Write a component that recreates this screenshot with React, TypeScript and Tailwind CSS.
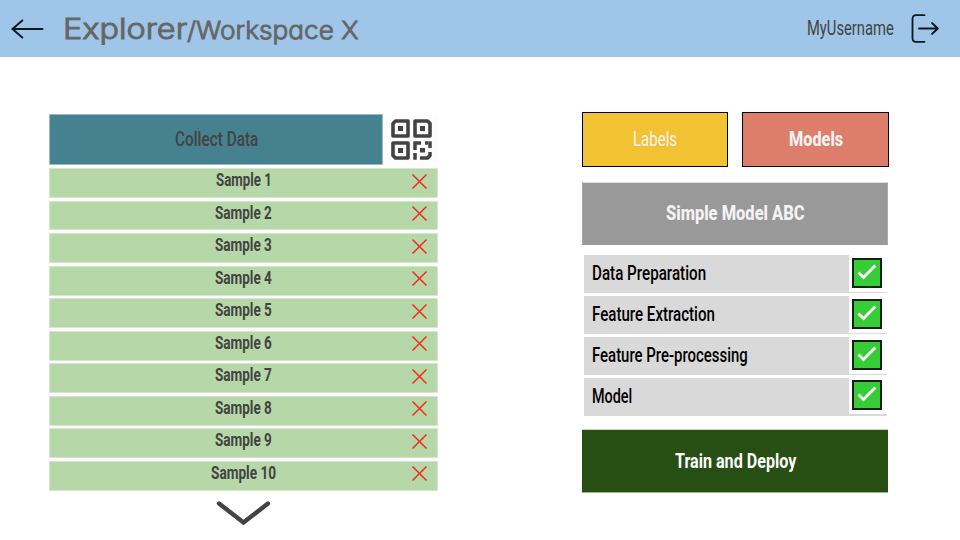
import React, { useLayoutEffect, useRef, useState } from "react";

// Sets a line of text to an exact width by condensing or widening its glyphs.
function Fit({ width, className = "", children }: { width: number; className?: string; children: string }) {
  const ref = useRef<HTMLSpanElement>(null);
  const [scale, setScale] = useState(1);
  useLayoutEffect(() => {
    if (ref.current) setScale(width / ref.current.offsetWidth);
  }, [width, children]);
  return (
    <span className="flex shrink-0" style={{ width }}>
      <span
        ref={ref}
        className={`inline-block shrink-0 origin-left whitespace-nowrap font-[Roboto,sans-serif] ${className}`}
        style={{ transform: `scaleX(${scale})` }}
      >
        {children}
      </span>
    </span>
  );
}

const samples = [56, 57, 57, 57, 57, 57, 57, 57, 57, 65];

const steps = [
  { name: "Data Preparation", width: 114 },
  { name: "Feature Extraction", width: 123 },
  { name: "Feature Pre-processing", width: 156 },
  { name: "Model", width: 40 },
];

function QrIcon() {
  return (
    <svg className="h-[41px] w-[41px]" viewBox="0 0 41 41" fill="none" stroke="#434343" strokeWidth="3.6">
      <path d="M4.500 2H17V17H2V4.500Z M24 2H36.500L39 4.500V17H24Z M2 24H17V39H4.500L2 36.500Z" strokeLinejoin="round" />
      <path d="M7 7h5v5h-5z M29 7h5v5h-5z M7 29h5v5h-5z" fill="#434343" stroke="none" />
      <path d="M24 31V24H30 M34 24H37 M39 22.300V29 M24 34V40.700 M29 39H36.500L39 36.500V33" strokeWidth="3.5" />
      <path d="M29 29h5v4.500h-5z" fill="#434343" stroke="none" />
    </svg>
  );
}

export default function App() {
  return (
    <div className="flex h-[540px] w-[960px] flex-col overflow-hidden bg-white">
      <header className="flex h-[57px] shrink-0 items-center bg-[#9fc5e8] pl-[11px] pr-[20px]">
        <svg className="mt-[1px] h-[20px] w-[33px] shrink-0" viewBox="0 0 33 20" fill="none" stroke="#111a20" strokeWidth="2" strokeLinecap="round">
          <path d="M2 10H31.500 M11.300 1.500L1.500 10L11.300 18.500" />
        </svg>
        <h1 className="ml-[19px] mt-[1px] flex items-baseline text-[#666666]">
          <Fit width={124} className="font-[Inter,sans-serif]! text-[29px] leading-[40px] font-light [-webkit-text-stroke:1px_#666666] [font-feature-settings:'cv11','ss03']">Explorer</Fit>
          <Fit width={172} className="font-[Inter,sans-serif]! text-[24.5px] leading-[40px] font-light [-webkit-text-stroke:0.9px_#666666] [font-feature-settings:'cv11','ss03']">/Workspace X</Fit>
        </h1>
        <div className="ml-auto flex items-center">
          <Fit width={87} className="-mt-px text-[20.5px] leading-[30px] text-[#434343]">MyUsername</Fit>
          <svg className="ml-[17px] h-[29px] w-[29px]" viewBox="0 0 29 29" fill="none" stroke="#10161a" strokeWidth="1.8" strokeLinecap="round" strokeLinejoin="round">
            <path d="M13.500 1.200H5Q1.500 1.200 1.500 4.700V24.300Q1.500 27.800 5 27.800H13.500" />
            <path d="M8 14.500H26.500 M21 9L26.800 14.500L21 20" />
          </svg>
        </div>
      </header>

      <main className="flex flex-1 items-start pl-[49px] pt-[55px]">
        <section className="mt-[2px] w-[389px]">
          <div className="flex h-[51px]">
            <div className="flex w-[334px] items-center justify-center border border-[#9bbcc5] bg-[#45818e]">
              <Fit width={83} className="-mt-px text-[20.5px] leading-[30px] font-medium text-[#434343]">Collect Data</Fit>
            </div>
            <div className="ml-[3px] flex flex-1 items-center justify-center bg-[#fdfdfd] pr-[1px]">
              <QrIcon />
            </div>
          </div>
          <div className="mt-[3px] flex flex-col gap-[2.6px]">
            {samples.map((width, i) => (
              <div key={i} className="grid h-[29.950px] grid-cols-[1fr_auto_1fr] items-start border border-[#d5e8cd] bg-[#b6d7a8]">
                <span />
                <Fit width={width} className="text-[18px] leading-[21px] font-bold text-[#434343]">{`Sample ${i + 1}`}</Fit>
                <svg className="mr-[9px] mt-[3.500px] h-[17px] w-[17px] justify-self-end" viewBox="0 0 17 17" fill="none" stroke="#f22b20" strokeWidth="1.500">
                  <path d="M1.500 1.500L15.500 15.500M15.500 1.500L1.500 15.500" />
                </svg>
              </div>
            ))}
          </div>
          <svg className="ml-[167px] mt-[8px] h-[28px] w-[55px]" viewBox="0 0 55 28" fill="none" stroke="#434343" strokeWidth="4.400" strokeLinecap="round">
            <path d="M3 4.500L27.500 23.500L52 4.500" strokeLinejoin="miter" />
          </svg>
        </section>

        <section className="ml-[144px] w-[307px]">
          <div className="flex h-[55px] gap-[14px]">
            <button className="flex w-[146px] items-center justify-center border border-black bg-[#f1c232]">
              <Fit width={44} className="-mt-px text-[20.5px] leading-[30px] text-[#f3f3f3]">Labels</Fit>
            </button>
            <button className="flex w-[147px] items-center justify-center border border-black bg-[#dd7e6b]">
              <Fit width={54} className="-mt-px text-[20.5px] leading-[30px] font-extrabold text-[#f3f3f3]">Models</Fit>
            </button>
          </div>
          <div className="mt-[15px] flex h-[63px] w-[306px] items-center justify-center border border-t-[#dedede] border-x-[#aaaaaa] border-b-[#999999] bg-[#999999]">
            <Fit width={139} className="-mt-px text-[20.5px] leading-[30px] font-extrabold text-[#f3f3f3]">Simple Model ABC</Fit>
          </div>
          <div className="ml-[2px] mt-[10px] flex w-[303px] flex-col gap-[3px]">
            {steps.map((step, i) => (
              <div key={step.name} className="flex h-[38px] bg-[#d9d9d9]">
                <div className="flex w-[265px] items-center pl-[8px]">
                  <Fit width={step.width} className="-mt-[2px] text-[20.5px] leading-[30px] font-medium text-black">{step.name}</Fit>
                </div>
                <div className={`flex flex-1 items-start bg-white pl-[3px] ${i === 3 ? "h-[36px] pt-[2px]" : "h-[37px] pt-[3px]"}`}>
                  <div className="flex h-[30px] w-[30px] items-center justify-center border-2 border-[#151f15] bg-[#36cd36]">
                    <svg className="h-[26px] w-[26px]" viewBox="0 0 26 26" fill="none" stroke="white" strokeWidth="2.700">
                      <path d="M4.500 12.500L9.500 17.500L21.300 5.500" />
                    </svg>
                  </div>
                </div>
              </div>
            ))}
          </div>
          <button className="mt-[13px] flex h-[64px] w-[306px] items-center justify-center border-y border-t-[#c4dfba] border-b-[#9db392] bg-[#274e13]">
            <Fit width={121} className="-mt-px text-[20.5px] leading-[30px] font-bold text-white">Train and Deploy</Fit>
          </button>
        </section>
      </main>
    </div>
  );
}
